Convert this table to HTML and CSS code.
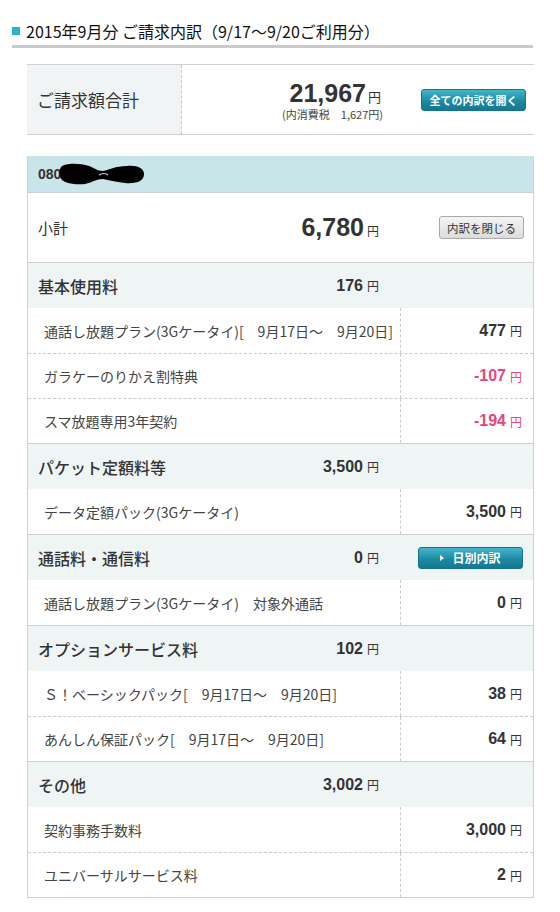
FILE: index.html
```html
<!DOCTYPE html>
<html lang="ja">
<head>
  <meta charset="UTF-8">
  <title>ご請求内訳</title>
  <link rel="stylesheet" href="styles.css">
</head>
<body>
  <div class="page">
    <h2 class="head"><span class="mark"></span>2015年9月分 ご請求内訳（9/17～9/20ご利用分）</h2>

    <div class="total">
      <div class="total-label">ご請求額合計</div>
      <div class="total-value">
        <div><span class="big">21,967</span><span class="yen-l">円</span></div>
        <div class="tax">(内消費税　1,627円)</div>
      </div>
      <div class="total-btn"><span class="btn blue">全ての内訳を開く</span></div>
    </div>

    <div class="line">
      <div class="line-head">
        <span class="num">080</span>
        <svg class="blot" width="86" height="22" viewBox="0 0 86 22">
          <path d="M2 4 C6 0 20 0 30 3 C36 5 38 8 44 8 C50 7 56 3 68 3 C78 2 85 5 85 11 C85 18 78 21 66 20 C56 19 50 17 44 16 C38 16 34 19 26 21 C14 22 3 20 1 14 C0 10 0 7 2 4 Z" fill="#000"/>
          <path d="M40 12 C43 10 47 10 49 12" stroke="#c9e5ea" stroke-width="1.2" fill="none"/>
        </svg>
      </div>

      <div class="row sub">
        <div class="cell-a">
          <span class="lbl">小計</span>
          <span class="amt"><b class="mid">6,780</b><span class="yen">円</span></span>
        </div>
        <div class="cell-b"><span class="btn gray">内訳を閉じる</span></div>
      </div>

      <div class="row sec">
        <div class="cell-a"><span class="lbl">基本使用料</span><span class="amt"><b>176</b><span class="yen">円</span></span></div>
        <div class="cell-b"></div>
      </div>
      <div class="row item">
        <div class="cell-a">通話し放題プラン(3Gケータイ)[　9月17日～　9月20日]</div>
        <div class="cell-b"><b>477</b><span class="yen">円</span></div>
      </div>
      <div class="row item dash">
        <div class="cell-a">ガラケーのりかえ割特典</div>
        <div class="cell-b minus"><b>-107</b><span class="yen">円</span></div>
      </div>
      <div class="row item dash">
        <div class="cell-a">スマ放題専用3年契約</div>
        <div class="cell-b minus"><b>-194</b><span class="yen">円</span></div>
      </div>

      <div class="row sec">
        <div class="cell-a"><span class="lbl">パケット定額料等</span><span class="amt"><b>3,500</b><span class="yen">円</span></span></div>
        <div class="cell-b"></div>
      </div>
      <div class="row item">
        <div class="cell-a">データ定額パック(3Gケータイ)</div>
        <div class="cell-b"><b>3,500</b><span class="yen">円</span></div>
      </div>

      <div class="row sec">
        <div class="cell-a"><span class="lbl">通話料・通信料</span><span class="amt"><b>0</b><span class="yen">円</span></span></div>
        <div class="cell-b"><span class="btn blue day"><i class="arr"></i>日別内訳</span></div>
      </div>
      <div class="row item">
        <div class="cell-a">通話し放題プラン(3Gケータイ)　対象外通話</div>
        <div class="cell-b"><b>0</b><span class="yen">円</span></div>
      </div>

      <div class="row sec">
        <div class="cell-a"><span class="lbl">オプションサービス料</span><span class="amt"><b>102</b><span class="yen">円</span></span></div>
        <div class="cell-b"></div>
      </div>
      <div class="row item">
        <div class="cell-a">Ｓ！ベーシックパック[　9月17日～　9月20日]</div>
        <div class="cell-b"><b>38</b><span class="yen">円</span></div>
      </div>
      <div class="row item dash">
        <div class="cell-a">あんしん保証パック[　9月17日～　9月20日]</div>
        <div class="cell-b"><b>64</b><span class="yen">円</span></div>
      </div>

      <div class="row sec">
        <div class="cell-a"><span class="lbl">その他</span><span class="amt"><b>3,002</b><span class="yen">円</span></span></div>
        <div class="cell-b"></div>
      </div>
      <div class="row item">
        <div class="cell-a">契約事務手数料</div>
        <div class="cell-b"><b>3,000</b><span class="yen">円</span></div>
      </div>
      <div class="row item dash">
        <div class="cell-a">ユニバーサルサービス料</div>
        <div class="cell-b"><b>2</b><span class="yen">円</span></div>
      </div>
    </div>
  </div>
</body>
</html>
```

FILE: styles.css
```css
*{margin: 0;padding: 0;box-sizing: border-box;}
body{
  background: #fff;
  color: #333;
  font-family: "Noto Sans CJK JP", "Liberation Sans", sans-serif;
}
.page{
  width: 560px;
  padding: 20px 0 0 0;
}
.head{
  margin: 0 27px 0 12px;
  padding: 0 0 3px 0;
  border-bottom: 3px solid #cacaca;
  font-size: 16px;
  font-weight: normal;
  line-height: 22px;
  color: #111;
  display: flex;
  align-items: center;
}
.mark{
  display: inline-block;
  width: 8px;height: 8px;
  background: #2ab3d1;
  margin-right: 6px;
}
.total{
  margin: 16px 26px 0 27px;
  height: 71px;
  border-top: 1px solid #d0d0d0;
  border-bottom: 1px solid #d0d0d0;
  display: grid;
  grid-template-columns: 155px 199px 1fr;
}
.total-label{
  background: #f0f4f4;
  border-right: 1px dashed #c8c8c8;
  font-size: 17px;
  padding-left: 10px;
  display: flex;
  align-items: center;
}
.total-value{
  text-align: right;
  display: flex;
  flex-direction: column;
  justify-content: center;
  padding-top: 2px;
}
.big{
  font-family: "Liberation Sans", sans-serif;
  font-weight: bold;
  font-size: 25px;
  line-height: 26px;
}
.yen-l{font-size: 13px;margin-left: 2px;}
.tax{
  font-size: 11px;
  line-height: 14px;
  color: #444;
  margin-right: -2px;
}
.total-btn{
  display: flex;
  align-items: center;
  justify-content: flex-end;
  padding: 0 8px 0 0;
}
.btn{
  display: inline-flex;
  align-items: center;
  justify-content: center;
  border-radius: 3px;
  font-size: 11px;
  font-weight: bold;
  height: 22px;
}
.btn.blue{
  width: 105px;
  color: #fff;
  background: linear-gradient(#45b5cc, #1d8aa4 55%, #15778f);
  border: 1px solid #17738a;
}
.btn.gray{
  width: 85px;
  height: 23px;
  color: #333;
  font-weight: normal;
  font-size: 11.5px;
  background: linear-gradient(#f4f4f4, #dcdcdc);
  border: 1px solid #a9a9a9;
  margin-right: -2px;
}
.btn.day{font-size: 12px;margin-right: -1px;}
.arr{
  width: 0;height: 0;
  border-left: 4px solid #fff;
  border-top: 3px solid transparent;
  border-bottom: 3px solid transparent;
  margin-right: 8px;
}
.line{
  margin: 21px 26px 0 27px;
  border: 1px solid #d0d0d0;
  border-top: none;
}
.line-head{
  height: 36px;
  background: #c9e5ea;
  display: flex;
  align-items: center;
  padding-left: 10px;
}
.num{
  font-family: "Liberation Sans", sans-serif;
  font-weight: bold;
  font-size: 14px;
  color: #333;
}
.blot{margin-left: -2px;}
.row{
  display: grid;
  grid-template-columns: 373px 1fr;
  border-top: 1px solid #cfcfcf;
}
.row b{
  font-family: "Liberation Sans", sans-serif;
  font-size: 16px;
}
.yen{font-size: 12px;}
.cell-a{
  display: flex;
  align-items: center;
  justify-content: space-between;
}
.cell-b{
  display: flex;
  align-items: center;
  justify-content: flex-end;
  padding-right: 11px;
  gap: 4px;
}
.row.sub{height: 70px;}
.row.sub .cell-a{padding: 0 22px 0 10px;}
.lbl{font-size: 15px;}
.mid{font-size: 25px !important;}
.row.sub .yen{font-size: 12px;margin-left: 3px;}
.row.sec{
  height: 46px;
  background: #eff4f5;
}
.row.sec .cell-a{padding: 0 22px 0 10px;}
.row.sec .lbl{font-size: 16px;font-weight: 500;color: #333;}
.row.sec .amt{display: flex;align-items: baseline;gap: 4px;}
.row.item{
  height: 45px;
  border-top: none;
  background: #fff;
  font-size: 14px;
  color: #444;
}
.row.item.dash{
  height: 45px;
  border-top: 1px dashed #cccccc;
}
.row.item .cell-a{
  padding-left: 16px;
  border-right: 1px dashed #cccccc;
}
.row.item .cell-b{color: #333;}
.row.item .cell-b.minus{color: #e8457f;}
```
